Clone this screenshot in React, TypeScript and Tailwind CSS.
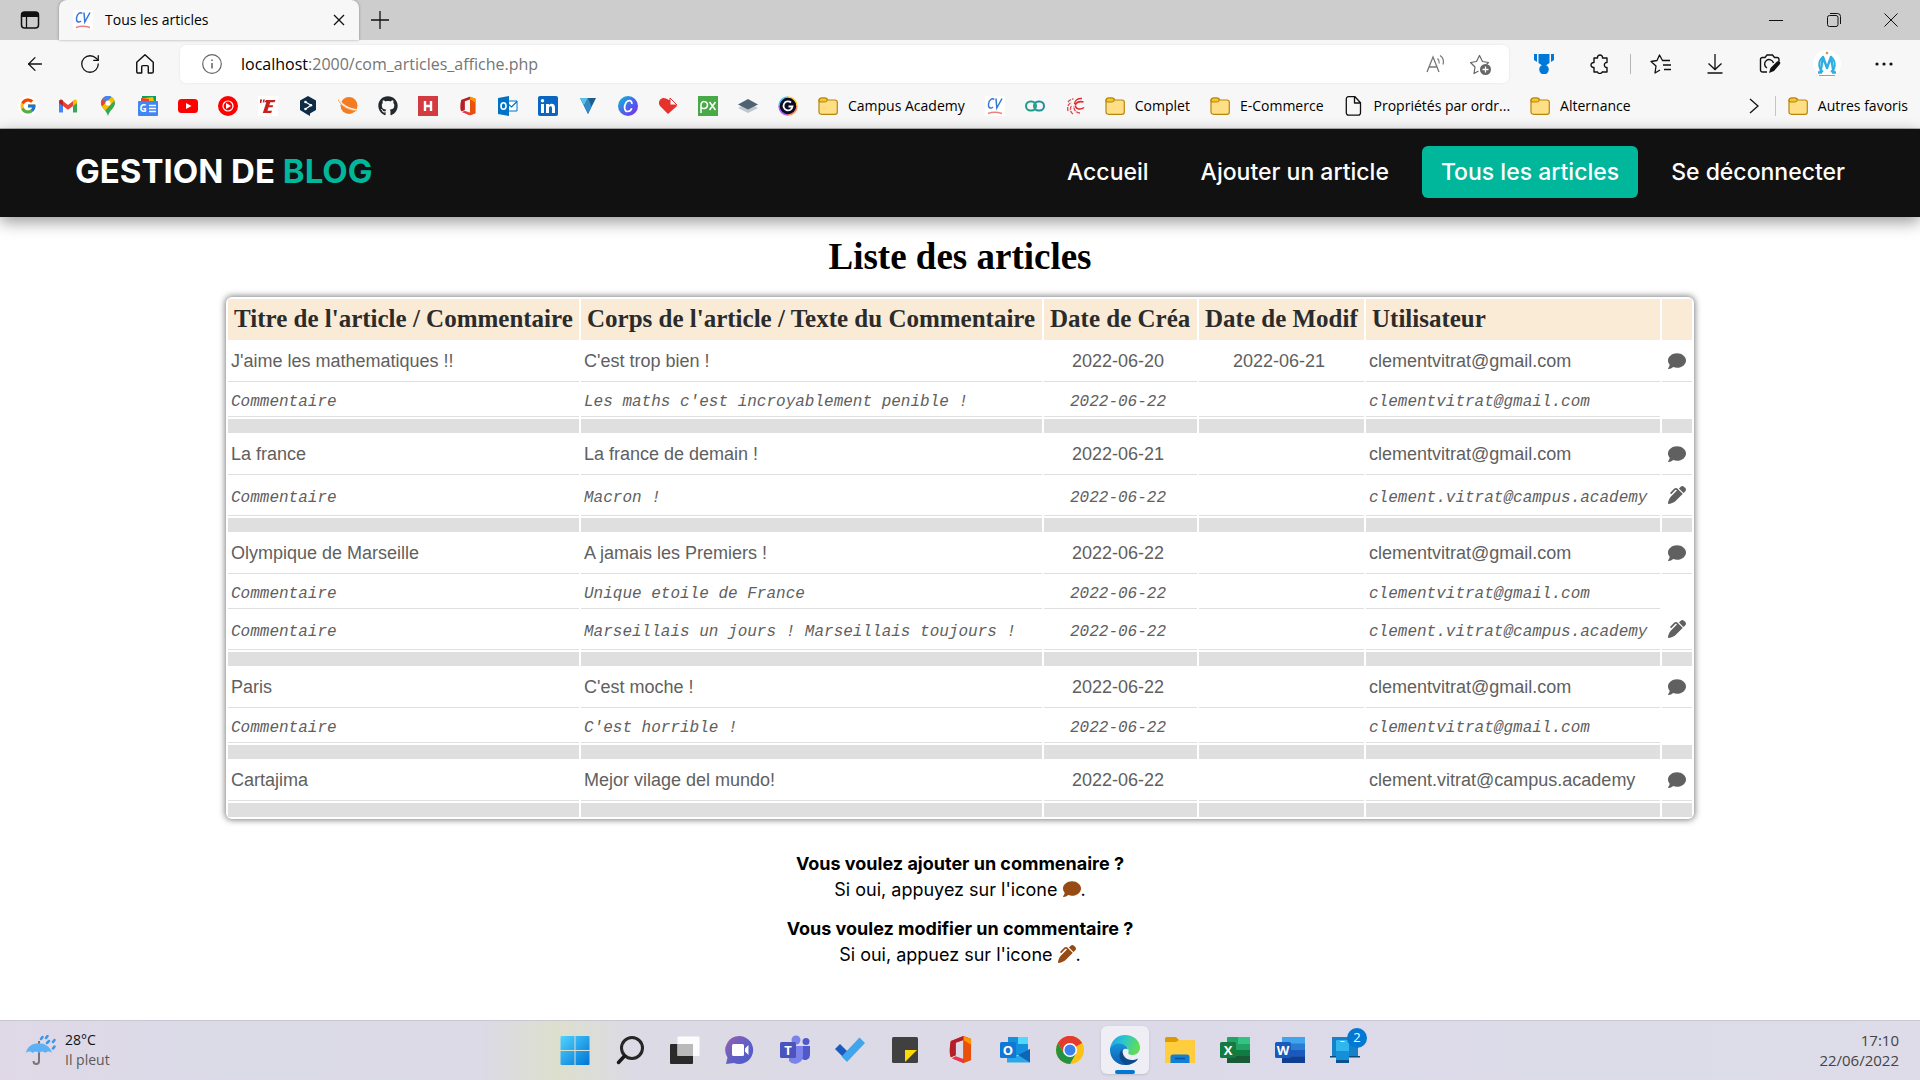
import React from "react";
import { FcGoogle } from "react-icons/fc";
import { FaComment, FaPenClip, FaGithub } from "react-icons/fa6";
import { ArrowLeft, RotateCw } from "lucide-react";

const ui = "font-['Open_Sans','Noto_Sans',sans-serif]";
const geo = "font-['Inter','Open_Sans',sans-serif]";

type SvgProps = { children: React.ReactNode; box?: string; className?: string };

function Svg({ children, box = "0 0 20 20", className = "size-5" }: SvgProps) {
  return (
    <svg viewBox={box} fill="none" aria-hidden="true" className={`shrink-0 ${className}`}>
      {children}
    </svg>
  );
}

function Folder() {
  return (
    <Svg>
      <path d="M1 4.500C1 3 2 2 3.500 2H7c1 0 1.500.4 2 1l.8 1H17c1.300 0 2.300 1 2.300 2.300V16c0 1.300-1 2.300-2.300 2.300H3.500C2 18.300 1 17.300 1 16z" fill="#ffdf85" stroke="#b8860b" strokeWidth="1.200" />
      <path d="M1 5C1 3 2 2 3.500 2H7c1 0 1.500.4 2 1l.3 1C9 5.500 8 6 7 6H2z" fill="#f5c52b" stroke="#b8860b" strokeWidth="1.200" />
    </Svg>
  );
}

function CvIcon() {
  return (
    <Svg>
      <rect width="20" height="20" fill="#fff" />
      <path d="M9.300 3.500C7 1.500 4 4 3.500 8s2 5 4.500 3M11 2.500l.8 9.500L17 2.500" stroke="#3478d6" strokeWidth="1.500" />
      <path d="M3 17.500c4-1.500 9-1.500 14 0" stroke="#f08080" strokeWidth="1.500" />
    </Svg>
  );
}

function OfficeIcon({ className }: { className?: string }) {
  return (
    <Svg box="0 0 24 30" className={className}>
      <path d="M15 1l8 3v22l-8 3-12-5 12 1V5L7 8v13l-5 2C0 21 1 8 2 6z" fill="#dc3e15" />
      <path d="M15 1l8 3v22l-8 3z" fill="#e8500b" />
      <path d="M15 1l8 3v6l-8-5z" fill="#ff9500" />
      <path d="M2 6l13-5v4L7 8v13l-5 2C0 19 1 9 2 6z" fill="#b3202c" />
      <path d="M3 24l4-2 8 3v4z" fill="#f0334c" />
    </Svg>
  );
}

const favicons: { name: string; icon: React.ReactNode }[] = [
  { name: "Google", icon: <FcGoogle className="size-5 rounded-full bg-white p-px" /> },
  {
    name: "Gmail",
    icon: (
      <Svg>
        <path d="M1 5v12h4V9l5 4 5-4v8h4V5z" fill="#fff" />
        <path d="M1 6v10.500h4V8.500z" fill="#4285f4" />
        <path d="M19 6v10.500h-4V8.500z" fill="#34a853" />
        <path d="M5 5l5 4 5-4v5l-5 3.800L5 10z" fill="#ea4335" />
        <path d="M1 5.500C1 3.500 3.300 2.800 5 4.500V10L1 7z" fill="#c5221f" />
        <path d="M19 5.500c0-2-2.300-2.700-4-1V10l4-3z" fill="#fbbc04" />
      </Svg>
    ),
  },
  {
    name: "Maps",
    icon: (
      <Svg>
        <path d="M10 0a7 7 0 0 0-7 7c0 5 5.500 7 7 13 1.500-6 7-8 7-13a7 7 0 0 0-7-7z" fill="#34a853" />
        <path d="M10 0a7 7 0 0 0-5.400 2.500L8 5.500 13.500 1A7 7 0 0 0 10 0z" fill="#4285f4" />
        <path d="M4.600 2.500A7 7 0 0 0 4 10.500L8 6z" fill="#ea4335" />
        <path d="M4 10.500c.8 1.500 2 2.800 3 4.200L16.500 4.500A7 7 0 0 0 13.500 1z" fill="#fbbc04" />
        <path d="M13.500 1A7 7 0 0 0 4.600 2.500L8 5.500z" fill="#4285f4" />
        <circle cx="10" cy="7" r="2.600" fill="#fff" />
      </Svg>
    ),
  },
  {
    name: "Google News",
    icon: (
      <Svg>
        <path d="M4 0h14v8H4z" fill="#0f9d58" />
        <path d="M3 2.500l12-1.500 2 8H3z" fill="#fbbc04" />
        <path d="M3 2l8 1v6H3z" fill="#ea4335" />
        <rect y="5" width="20" height="15" rx="1" fill="#4285f4" />
        <text x="1.500" y="16" fontSize="10" fontWeight="700" fill="#fff">G</text>
        <path d="M11 9.500h7M11 12.500h7M11 15.500h7" stroke="#fff" strokeWidth="1.500" />
      </Svg>
    ),
  },
  {
    name: "YouTube",
    icon: (
      <Svg>
        <rect y="3" width="20" height="14" rx="3.500" fill="#f00" />
        <path d="M8 7l5.500 3L8 13z" fill="#fff" />
      </Svg>
    ),
  },
  {
    name: "YouTube Music",
    icon: (
      <Svg>
        <circle cx="10" cy="10" r="10" fill="#f00" />
        <circle cx="10" cy="10" r="5" stroke="#fff" strokeWidth="1.200" />
        <path d="M8 7l5 3-5 3z" fill="#fff" />
      </Svg>
    ),
  },
  {
    name: "L'Equipe",
    icon: (
      <Svg>
        <rect width="20" height="20" fill="#fff" />
        <path d="M8 4h9.500l-1 2.200h-4.200l-1 3h4l-.8 2h-3.900l-1.200 3.600h4.600l-.8 2.200H4.800l3.500-10.800H6zM2 3.500h2.200L3.200 7H2zM5.200 3.500H7L5.800 6.500h-1z" fill="#c8201a" />
      </Svg>
    ),
  },
  {
    name: "DeepL",
    icon: (
      <Svg>
        <path d="M10 0l8 4.500v9.500L12 17.500V20l-4-2.300L2 14V4.500z" fill="#0f2b46" />
        <path d="M7.500 6L13 9.300 7.500 13" stroke="#fff" strokeWidth="1.200" />
        <circle cx="7.500" cy="6" r="1.300" fill="#fff" />
        <circle cx="13" cy="9.300" r="1.300" fill="#fff" />
        <circle cx="7.500" cy="13" r="1.300" fill="#fff" />
      </Svg>
    ),
  },
  {
    name: "Planet",
    icon: (
      <Svg>
        <circle cx="11" cy="9.500" r="8.500" fill="#f47b20" />
        <path d="M0 3c4 7 11 10.500 20 11.500" stroke="#f7f7f7" strokeWidth="2.200" />
        <path d="M0 3.500C3 10 10 14 19 14.800" stroke="#f9a45c" strokeWidth="1" />
      </Svg>
    ),
  },
  { name: "GitHub", icon: <FaGithub className="size-5 text-[#24292f]" /> },
  {
    name: "H",
    icon: (
      <Svg>
        <rect width="20" height="20" fill="#d33b40" />
        <path d="M7 5v10M13 5v10M7 10h6" stroke="#fff" strokeWidth="2.400" />
      </Svg>
    ),
  },
  { name: "Office", icon: <OfficeIcon className="size-5" /> },
  {
    name: "Outlook",
    icon: (
      <Svg>
        <path d="M9 5h10v10H9z" fill="#fff" stroke="#0072c6" />
        <path d="M10 8l3.500 3L19 5.500" stroke="#0072c6" strokeWidth="1.200" />
        <path d="M0 2l11-2v20L0 18z" fill="#0072c6" />
        <ellipse cx="5.500" cy="10" rx="2.500" ry="3.300" stroke="#fff" strokeWidth="1.600" />
      </Svg>
    ),
  },
  {
    name: "LinkedIn",
    icon: (
      <Svg>
        <rect width="20" height="20" rx="2" fill="#0a66c2" />
        <path d="M3 8h3v9H3zM8 8h3v1.300C12.500 7 17 7.300 17 11.500V17h-3v-5c0-2.300-3-2.300-3 0v5H8z" fill="#fff" />
        <circle cx="4.500" cy="4.700" r="1.700" fill="#fff" />
      </Svg>
    ),
  },
  {
    name: "V",
    icon: (
      <Svg>
        <path d="M2 2h16l-8 16z" fill="#1d5d8c" />
        <path d="M2 2h8L6 9.500z" fill="#5bc0e8" />
        <path d="M6 9.500L10 2l3.500 8.500L10 18z" fill="#2f8cc8" />
      </Svg>
    ),
  },
  {
    name: "Canva",
    icon: (
      <Svg>
        <defs>
          <linearGradient id="canva" x1="0" y1="0" x2="1" y2="1">
            <stop offset="0" stopColor="#00c4cc" />
            <stop offset=".5" stopColor="#4a66f0" />
            <stop offset="1" stopColor="#7d2ae8" />
          </linearGradient>
        </defs>
        <circle cx="10" cy="10" r="10" fill="url(#canva)" />
        <path d="M13.800 8c.6-4-4-4.500-6-1s-1.600 8.500 1.800 8.500c2 0 3.500-1.500 4.200-3.300" stroke="#fff" strokeWidth="1.700" />
      </Svg>
    ),
  },
  {
    name: "I Love PDF",
    icon: (
      <Svg>
        <path d="M10 18L2 10C-1 6 3 0 8 2.500L11 4h2l6 6z" fill="#e5322d" />
        <path d="M12 2l7 7h-7z" fill="#fff" stroke="#e5322d" />
      </Svg>
    ),
  },
  {
    name: "Pixabay",
    icon: (
      <Svg>
        <rect width="20" height="20" fill="#48a947" />
        <path d="M3 17V9c0-5 6.500-4 6.500 0S4 13.500 3 11M11.500 6l6 8M17.500 6l-6 8" stroke="#fff" strokeWidth="1.500" />
      </Svg>
    ),
  },
  {
    name: "Layers",
    icon: (
      <Svg>
        <path d="M10 7l10 5-10 5-10-5z" fill="#bfc6cd" />
        <path d="M10 3l10 5.500-10 5-10-5z" fill="#4e6272" />
      </Svg>
    ),
  },
  {
    name: "G",
    icon: (
      <Svg>
        <circle cx="10" cy="10" r="9" fill="#0b0b23" />
        <path d="M10 1a9 9 0 0 1 9 9" stroke="#ffd23f" strokeWidth="1.500" />
        <path d="M19 10a9 9 0 0 1-9 9" stroke="#ff8a5c" strokeWidth="1.500" />
        <path d="M10 19a9 9 0 0 1-9-9" stroke="#a25cf0" strokeWidth="1.500" />
        <path d="M1 10a9 9 0 0 1 9-9" stroke="#45c9f5" strokeWidth="1.500" />
        <path d="M13 6.500a4.500 4.500 0 1 0 1.500 4h-4" stroke="#fff" strokeWidth="1.800" />
      </Svg>
    ),
  },
];

function BookmarkFolder({ label }: { label: string }) {
  return (
    <a href="#" className="flex items-center gap-2.5 whitespace-nowrap">
      <Folder />
      {label}
    </a>
  );
}

function TabStrip() {
  return (
    <div className="flex h-10 bg-[#cdcdcd]">
      <button aria-label="Menu des onglets" className="flex w-[59px] items-center justify-center">
        <Svg>
          <rect x="1.500" y="2" width="17" height="16" rx="3" stroke="#111" strokeWidth="1.500" />
          <path d="M1.500 7V5a3 3 0 0 1 3-3h11a3 3 0 0 1 3 3v2z" fill="#111" />
          <path d="M6.500 6v12" stroke="#111" strokeWidth="1.300" />
        </Svg>
      </button>
      <div className="flex w-[300px] items-center rounded-t-lg bg-[#f7f7f7] px-3.5 shadow-[0_0_3px_rgba(0,0,0,0.35)]">
        <CvIcon />
        <span className="ml-3 flex-1 text-sm">Tous les articles</span>
        <button aria-label="Fermer l'onglet">
          <Svg box="0 0 12 12" className="size-3"><path d="M1 1l10 10M11 1L1 11" stroke="#111" strokeWidth="1.300" /></Svg>
        </button>
      </div>
      <button aria-label="Nouvel onglet" className="ml-3">
        <Svg box="0 0 18 18" className="size-[18px]"><path d="M9 0v18M0 9h18" stroke="#111" strokeWidth="1.300" /></Svg>
      </button>
      <div className="ml-auto flex">
        <button aria-label="Réduire" className="flex w-[58px] items-center justify-center">
          <Svg box="0 0 14 14" className="size-3.5"><path d="M0 7.500h14" stroke="#111" /></Svg>
        </button>
        <button aria-label="Restaurer" className="flex w-[57px] items-center justify-center">
          <Svg box="0 0 14 14" className="size-3.5">
            <rect x=".5" y="2.500" width="10.500" height="11" rx="2" stroke="#111" />
            <path d="M3 .5h7.500a3 3 0 0 1 3 3V11" stroke="#111" />
          </Svg>
        </button>
        <button aria-label="Fermer" className="flex w-[58px] items-center justify-center">
          <Svg box="0 0 14 14" className="size-3.5"><path d="M.5.5l13 13M13.500.5l-13 13" stroke="#111" /></Svg>
        </button>
      </div>
    </div>
  );
}

function AddressRow() {
  return (
    <div className="flex h-12 items-center bg-[#f7f7f7] pl-6">
      <div className="flex w-[156px] items-center gap-[33px] text-[#111]">
        <button aria-label="Retour"><ArrowLeft className="size-[22px]" strokeWidth={1.4} /></button>
        <button aria-label="Actualiser"><RotateCw className="size-[22px]" strokeWidth={1.4} /></button>
        <button aria-label="Accueil">
          <Svg className="size-[22px]"><path d="M2.500 8.500L10 1.500l7.500 7V17a1.200 1.200 0 0 1-1.200 1.200H13V12.500a1 1 0 0 0-1-1H8a1 1 0 0 0-1 1v5.700H3.700A1.200 1.200 0 0 1 2.500 17z" stroke="#111" strokeWidth="1.300" strokeLinejoin="round" /></Svg>
        </button>
      </div>
      <div className="flex h-[38px] flex-1 items-center rounded-md bg-white px-[18px] shadow-[0_0_3px_rgba(0,0,0,0.08)]">
        <div className="flex w-full items-center pl-1">
          <Svg>
            <circle cx="10" cy="10" r="9.300" stroke="#666" strokeWidth="1.200" />
            <path d="M10 9v5.500M10 5.500V7" stroke="#555" strokeWidth="1.400" />
          </Svg>
          <p className="ml-[19px] flex-1 text-base text-[#757575]">
            <span className="text-black">localhost</span>:2000/com_articles_affiche.php
          </p>
          <button aria-label="Lire à voix haute" className="mr-[23px]">
            <Svg>
              <path d="M1 18L7 3l6 15M3 13h8" stroke="#777" strokeWidth="1.300" />
              <path d="M11.500 4.500c1.500 1.300 2 3 1.700 5M14 1.500c3 2 4 5.500 3 9" stroke="#777" strokeWidth="1.200" />
            </Svg>
          </button>
          <button aria-label="Ajouter aux favoris">
            <Svg box="0 0 22 22" className="size-[22px]">
              <path d="M9.500 18L5 20.500l1-6.500-4.500-4.500 6-1L10.500 2.500l3 6 6 1-2 2" stroke="#666" strokeWidth="1.200" strokeLinejoin="round" />
              <circle cx="16.500" cy="16.500" r="5.500" fill="#666" />
              <path d="M16.500 13.500v6M13.500 16.500h6" stroke="#fff" strokeWidth="1.300" />
            </Svg>
          </button>
        </div>
      </div>
      <div className="flex items-center pr-[27px] pl-[25px]">
        <button aria-label="Récompenses">
          <Svg>
            <path d="M0 0h3v8L0 6zM4.500 0h11v9l-3 2h-5l-3-2zM20 0h-3v8l3-2z" fill="#0078d7" />
            <circle cx="10" cy="15.500" r="4.800" fill="#0078d7" />
          </Svg>
        </button>
        <button aria-label="Extensions" className="ml-9">
          <Svg>
            <path d="M4 4h3.500c-.5-4 5.500-4 5 0H17v4.500c-3.500-.5-3.500 5.500 0 5V18h-4.500c.3-1-.5 1.500-2.500 1.500S7.300 18 7.500 18H4v-4.500c-4 .5-4-5.500 0-5z" stroke="#111" strokeWidth="1.400" strokeLinejoin="round" />
          </Svg>
        </button>
        <span className="ml-5 h-5 w-px bg-[#b5b5b5]" />
        <button aria-label="Favoris" className="ml-[19px]">
          <Svg box="0 0 22 22" className="size-[22px]">
            <path d="M10 17l-5 3 1-7-5-4.500 6-1L9.500 2l3 5.500H20M13 12h8M14 16.500h7" stroke="#111" strokeWidth="1.300" strokeLinejoin="round" />
          </Svg>
        </button>
        <button aria-label="Téléchargements" className="ml-[33px]">
          <Svg><path d="M10 0v15M3.500 9.500l6.500 6 6.500-6M2.500 19h15" stroke="#111" strokeWidth="1.300" /></Svg>
        </button>
        <button aria-label="Capture web" className="ml-[34px]">
          <Svg box="0 0 22 22" className="size-[22px]">
            <path d="M8 19H3.500A2 2 0 0 1 1.500 17V6.500a2 2 0 0 1 2-2H6L8 2h5.500l2 2.500H18a2 2 0 0 1 2 2V8" stroke="#111" strokeWidth="1.400" />
            <path d="M8 15a4.500 4.500 0 1 1 6.500-5" stroke="#111" strokeWidth="1.400" />
            <path d="M10 20l1.500-5L18 8.500c2-1.500 4 .5 3 2.500L15 18z" fill="#111" />
          </Svg>
        </button>
        <button aria-label="Profil" className="ml-8 rounded-full bg-white">
          <Svg box="0 0 28 28" className="size-7">
            <path d="M10 7C5 11 5 18 10 22M18 7c5 4 5 11 0 15" stroke="#2faee0" strokeWidth="2" />
            <path d="M5 22.500h4M19 22.500h4M7.500 22L10 7l4 11 4-11 2.500 15" stroke="#2faee0" strokeWidth="2.400" strokeLinejoin="round" />
            <circle cx="14" cy="3" r="1.300" fill="#c79a4b" />
            <path d="M6 25.500h16" stroke="#c79a4b" />
          </Svg>
        </button>
        <button aria-label="Paramètres" className="ml-[34px]">
          <Svg box="0 0 18 18" className="size-[18px]">
            <circle cx="2" cy="9" r="1.600" fill="#111" /><circle cx="9" cy="9" r="1.600" fill="#111" /><circle cx="16" cy="9" r="1.600" fill="#111" />
          </Svg>
        </button>
      </div>
    </div>
  );
}

function BookmarksBar() {
  return (
    <div className="flex h-[41px] items-center gap-5 border-b border-[#b5b5b5] bg-[#f7f7f7] pr-3 pb-1 pl-[18px] text-sm">
      {favicons.map((f) => (
        <a key={f.name} href="#" aria-label={f.name}>{f.icon}</a>
      ))}
      <BookmarkFolder label="Campus Academy" />
      <a href="#" aria-label="CV"><CvIcon /></a>
      <a href="#" aria-label="Cercles">
        <Svg>
          <rect x="1" y="5.500" width="10" height="9" rx="4.500" stroke="#1f9e86" strokeWidth="2" />
          <rect x="9" y="5.500" width="10" height="9" rx="4.500" stroke="#1f8f9e" strokeWidth="2" />
          <path d="M10 6.500v7" stroke="#23a88f" strokeWidth="1.500" />
        </Svg>
      </a>
      <a href="#" aria-label="Spirale">
        <Svg>
          <path d="M17 2.500C13 2 9.500 4.500 9.500 8M18.500 6c-4-1-7 0-8.500 3.500M19 11.500c-3 2.500-8 2-8.500-1.500" stroke="#dc2b33" strokeWidth="1.500" />
          <path d="M15 17c-4 0-6.500-3-6-7M8 18c-3-2-3.500-6-1-9M3 15C2 11 3 8 6.500 6.500M3 6c1.500-2 3.500-3 5.500-3" stroke="#e0474e" strokeWidth="1.300" strokeDasharray="4 1" />
        </Svg>
      </a>
      <BookmarkFolder label="Complet" />
      <BookmarkFolder label="E-Commerce" />
      <a href="#" className="flex items-center gap-2.5 whitespace-nowrap">
        <Svg>
          <path d="M4.500.7H11l5.500 6V17a2.200 2.200 0 0 1-2.200 2.200H4.500A2.200 2.200 0 0 1 2.300 17V3A2.200 2.200 0 0 1 4.500.7zM10.500.7V7h6" stroke="#111" strokeWidth="1.300" strokeLinejoin="round" />
        </Svg>
        Propriétés par ordr...
      </a>
      <BookmarkFolder label="Alternance" />
      <div className="ml-auto flex items-center">
        <button aria-label="Plus de favoris">
          <Svg box="0 0 10 16" className="h-4 w-2.5"><path d="M1 1l8 7-8 7" stroke="#111" strokeWidth="1.300" /></Svg>
        </button>
        <span className="mr-3 ml-4 h-5 w-px bg-[#c5c5c5]" />
        <BookmarkFolder label="Autres favoris" />
      </div>
    </div>
  );
}

const navLinks = ["Accueil", "Ajouter un article", "Tous les articles", "Se déconnecter"];

function SiteHeader() {
  return (
    <header className={`flex h-[88px] items-center justify-between bg-[#111] pr-14 pb-0.5 pl-[75px] text-white shadow-[0_5px_15px_rgba(0,0,0,0.4)] ${geo}`}>
      <a href="#" className="text-[33px] font-bold whitespace-nowrap">
        GESTION DE <span className="text-[#00b69b]">BLOG</span>
      </a>
      <nav className="flex gap-3.5 text-[23px] font-medium whitespace-nowrap">
        {navLinks.map((label) => (
          <a
            key={label}
            href="#"
            className={
              label === "Tous les articles"
                ? "flex h-[52px] items-center rounded-md bg-[#00b69b] px-[19px]"
                : "flex h-[52px] items-center px-[19px]"
            }
          >
            {label}
          </a>
        ))}
      </nav>
    </header>
  );
}

type Row = { title?: string; body: string; created: string; edited?: string; user: string; action?: "comment" | "edit" };

const groups: Row[][] = [
  [
    { title: "J'aime les mathematiques !!", body: "C'est trop bien !", created: "2022-06-20", edited: "2022-06-21", user: "clementvitrat@gmail.com", action: "comment" },
    { body: "Les maths c'est incroyablement penible !", created: "2022-06-22", user: "clementvitrat@gmail.com" },
  ],
  [
    { title: "La france", body: "La france de demain !", created: "2022-06-21", user: "clementvitrat@gmail.com", action: "comment" },
    { body: "Macron !", created: "2022-06-22", user: "clement.vitrat@campus.academy", action: "edit" },
  ],
  [
    { title: "Olympique de Marseille", body: "A jamais les Premiers !", created: "2022-06-22", user: "clementvitrat@gmail.com", action: "comment" },
    { body: "Unique etoile de France", created: "2022-06-22", user: "clementvitrat@gmail.com" },
    { body: "Marseillais un jours ! Marseillais toujours !", created: "2022-06-22", user: "clement.vitrat@campus.academy", action: "edit" },
  ],
  [
    { title: "Paris", body: "C'est moche !", created: "2022-06-22", user: "clementvitrat@gmail.com", action: "comment" },
    { body: "C'est horrible !", created: "2022-06-22", user: "clementvitrat@gmail.com" },
  ],
  [
    { title: "Cartajima", body: "Mejor vilage del mundo!", created: "2022-06-22", user: "clement.vitrat@campus.academy", action: "comment" },
  ],
];

const headings = ["Titre de l'article / Commentaire", "Corps de l'article / Texte du Commentaire", "Date de Créa", "Date de Modif", "Utilisateur", ""];

function ArticleRow({ row }: { row: Row }) {
  const article = row.title !== undefined;
  const height = article ? "h-10" : row.action ? "h-[39px]" : "h-[33px]";
  const font = article
    ? "font-['Liberation_Sans',Arial,sans-serif] text-lg/5"
    : "font-['Liberation_Mono',monospace] text-base/5 italic";
  const line = "border-b border-[#dfdfdf] px-[3px]";
  const cell = article ? `${line} pb-0.5` : `${line} pt-[3px]`;
  return (
    <tr className={`${height} ${font} whitespace-nowrap`}>
      <td className={cell}>{row.title ?? "Commentaire"}</td>
      <td className={cell}>{row.body}</td>
      <td className={`${cell} pr-2 text-center`}>{row.created}</td>
      <td className={`${cell} pr-2 text-center`}>{row.edited}</td>
      <td className={cell}>{row.user}</td>
      <td className={row.action ? `${line} pb-0.5` : ""}>
        {row.action && (
          <button aria-label={row.action === "comment" ? "Commenter" : "Modifier"} className="mx-auto block">
            {row.action === "comment" ? <FaComment className="size-[18px]" /> : <FaPenClip className="size-[18px]" />}
          </button>
        )}
      </td>
    </tr>
  );
}

function ArticleTable() {
  return (
    <table className="mx-auto border-separate border-spacing-0.5 rounded-md bg-white text-[#606060] shadow-[0_0_6px_1px_rgba(0,0,0,0.5)]">
      <colgroup>
        <col className="w-[351px]" />
        <col className="w-[461px]" />
        <col className="w-[153px]" />
        <col className="w-[165px]" />
        <col className="w-[294px]" />
        <col className="w-[30px]" />
      </colgroup>
      <thead>
        <tr className="h-[41px] text-left font-['Liberation_Serif','Times_New_Roman',serif] text-[25px] leading-7 whitespace-nowrap text-[#2b2b2b]">
          {headings.map((h) => (
            <th key={h} className="bg-[#faebd7] px-1.5 pb-0.5 font-bold">{h}</th>
          ))}
        </tr>
      </thead>
      {groups.map((rows, g) => (
        <tbody key={g}>
          {rows.map((row, i) => <ArticleRow key={i} row={row} />)}
          <tr className="h-3.5">
            {headings.map((h) => <td key={h} className="bg-[#dfdfdf]" />)}
          </tr>
        </tbody>
      ))}
    </table>
  );
}

function LetterTile({ letter, dark }: { letter: string; dark: string }) {
  return (
    <>
      <rect y="7" width="16" height="16" rx="1.500" fill={dark} />
      <text x="8" y="19.500" textAnchor="middle" fontSize="13" fontWeight="700" fill="#fff">{letter}</text>
    </>
  );
}

const taskIcons: { name: string; icon: React.ReactNode }[] = [
  {
    name: "Démarrer",
    icon: (
      <>
        <defs>
          <linearGradient id="win" x1="0" y1="0" x2="1" y2="1">
            <stop offset="0" stopColor="#4fd3ff" />
            <stop offset="1" stopColor="#0074d4" />
          </linearGradient>
        </defs>
        <path d="M.5 2a1 1 0 0 1 1-1H14.500v14H.5zM15.500 1H28.500a1 1 0 0 1 1 1V15h-14zM.5 16H14.500v14h-13a1 1 0 0 1-1-1zM15.500 16h14v13a1 1 0 0 1-1 1h-13z" fill="url(#win)" />
      </>
    ),
  },
  { name: "Rechercher", icon: <><circle cx="17" cy="13" r="10.500" stroke="#262626" strokeWidth="3" /><path d="M9.500 21L3.500 27.500" stroke="#1a1a1a" strokeWidth="3.500" strokeLinecap="round" /></> },
  { name: "Vue des tâches", icon: <><rect y="9" width="23" height="20" rx="1" fill="#2a2a2a" /><rect x="7.500" y="1.500" width="22" height="19.500" rx="1" fill="#fff" fillOpacity=".9" /><path d="M7.500 9H23v12H7.500z" fill="#b9b9b9" /></> },
  {
    name: "Conversation",
    icon: (
      <>
        <defs><linearGradient id="chat" x1="0" y1="0" x2="1" y2="1"><stop offset="0" stopColor="#9660b0" /><stop offset=".6" stopColor="#5b5fc7" /><stop offset="1" stopColor="#5059c9" /></linearGradient></defs>
        <path d="M15 1a14 14 0 1 1-6 27L1 29l1.500-6.500A14 14 0 0 1 15 1z" fill="url(#chat)" />
        <rect x="7" y="9" width="12" height="12" rx="1.500" fill="#fff" />
        <path d="M20 13.500L23.500 10v10L20 16.500z" fill="#fff" />
      </>
    ),
  },
  { name: "Teams", icon: <><circle cx="16" cy="5" r="4.500" fill="#7b83eb" /><circle cx="26" cy="6.500" r="3.500" fill="#5059c9" /><path d="M20 11h10v9a5 5 0 0 1-8 4z" fill="#5059c9" /><path d="M9 11h14v10a8 8 0 0 1-14 5z" fill="#7b83eb" /><LetterTile letter="T" dark="#4b53bc" /></> },
  { name: "To Do", icon: <><path d="M0 14l5-5 9 9-5 5z" fill="#185abd" /><path d="M6.500 21.500L24.500 2.500l5.500 5.500-18 19z" fill="#41a5ee" /></> },
  { name: "Pense-bêtes", icon: <><rect x="2" y="2" width="26" height="26" rx="1.500" fill="#404040" /><path d="M15 15h12L15 27z" fill="#ffd900" /></> },
  { name: "Office", icon: <svg x="4" y="0" width="23" height="29" viewBox="0 0 24 30"><OfficeIcon className="" /></svg> },
  { name: "Outlook", icon: <><rect x="8" y="2" width="20" height="18" fill="#1490df" /><path d="M18 2h10v7H18z" fill="#50d9ff" /><path d="M7 14l11 7 12-7v13.500H7z" fill="#28a8ea" /><path d="M30 14v13.500L18 20z" fill="#1066b5" /><LetterTile letter="O" dark="#0f78d4" /></> },
  { name: "Chrome", icon: <><circle cx="15" cy="15" r="14" fill="#fbc116" /><path d="M15 15L2.900 8A14 14 0 0 1 27.100 8z" fill="#e33b2e" /><path d="M15 8h12.100A14 14 0 0 0 2.900 8L9 18.500z" fill="#e33b2e" /><path d="M2.900 8A14 14 0 0 0 15 29l6-10.500-12 0z" fill="#229342" /><circle cx="15" cy="15" r="7" fill="#fff" /><circle cx="15" cy="15" r="5.500" fill="#3b82ee" /></> },
  {
    name: "Edge",
    icon: (
      <>
        <defs>
          <linearGradient id="edge" x1="0" y1="0" x2="1" y2=".3"><stop offset="0" stopColor="#1a9fe0" /><stop offset=".5" stopColor="#2cc6cf" /><stop offset="1" stopColor="#5fdc58" /></linearGradient>
          <linearGradient id="edge2" x1="0" y1="0" x2="0" y2="1"><stop offset="0" stopColor="#1794dc" /><stop offset="1" stopColor="#0a5eb0" /></linearGradient>
        </defs>
        <path d="M0 14C1 6 7 0 15 0c9 0 15 6 15 12.500 0 5-4 7.500-7.500 7.500-3 0-5-1-4-3 1-4-4-8-9-7C5 10.500 1 12 0 16z" fill="url(#edge)" />
        <path d="M0 15c0-3 4-6.500 8.500-6.500 5 0 9 3 9.500 6-3-2-6 0-6 3.500 0 5 4 8 9 8 3 0 5-1 7-2-3 4-8 6-13 6C6 30 0 23 0 15z" fill="url(#edge2)" />
        <path d="M12.500 14.500C8 17 8 26 16 29.800 21 29.500 26 27 28 23.500c-8 4-16 0-15.500-9z" fill="#0f4a8c" />
      </>
    ),
  },
  { name: "Explorateur de fichiers", icon: <><path d="M0 3.500A1.500 1.500 0 0 1 1.500 2H11l3 3h14.500A1.500 1.500 0 0 1 30 6.500V10H0z" fill="#dd9b00" /><path d="M0 7h11l3-2h14.500A1.500 1.500 0 0 1 30 6.500V28H0z" fill="#ffcd3d" /><path d="M5.500 28v-6a2.500 2.500 0 0 1 2.500-2.500h14a2.500 2.500 0 0 1 2.500 2.500v6z" fill="#0f7fd8" /><path d="M10 23.500h10" stroke="#0a5299" strokeWidth="1.500" /></> },
  { name: "Excel", icon: <><rect x="7" y="2" width="23" height="26" rx="1" fill="#21a366" /><path d="M18 2h12v7H18z" fill="#33c481" /><path d="M7 15h23v6H7z" fill="#107c41" /><path d="M7 21h23v7H7z" fill="#185c37" /><LetterTile letter="X" dark="#107c41" /></> },
  { name: "Word", icon: <><rect x="7" y="2" width="23" height="26" rx="1" fill="#2b7cd3" /><path d="M7 2h23v6.500H7z" fill="#41a5ee" /><path d="M7 15h23v6.500H7z" fill="#185abd" /><path d="M7 21.500h23V28H7z" fill="#103f91" /><LetterTile letter="W" dark="#185abd" /></> },
  { name: "Votre téléphone", icon: <><path d="M2 2h26v19H2z" fill="#1581c9" /><path d="M0 21h30v1.500H0z" fill="#0c4a7a" /><rect x="6" y="5" width="13" height="23" rx="1" fill="#30b5ee" /><path d="M6 16h13v9H6z" fill="#1590d8" /><path d="M6 25h13v3H6z" fill="#104f8e" /><path d="M10.500 6.500h4" stroke="#fff" /></> },
];

function Taskbar() {
  return (
    <footer className={`grid h-[60px] grid-cols-[1fr_auto_1fr] items-center border-t border-[#c9c8d2] bg-[linear-gradient(90deg,#e0d8e6_0%,#dcdae8_8%,#dbdae6_25%,#dddfcd_29%,#dcdae5_33%,#dcdae8_60%,#dddce8_100%)] pb-px ${ui}`}>
      <div className="flex items-center gap-2 pl-[26px]">
        <Svg box="0 0 31 31" className="size-[31px]">
          <path d="M13 6v20c0 4-5.500 4-5.500 0" stroke="#777" strokeWidth="2" />
          <path d="M0 18C2 5 23 5 26 18c-2-2-5-2-6.500 0-2-2-4.500-2-6.500 0-2-2-4.500-2-6.500 0C5 16 2 16 0 18z" fill="#5eb0f5" />
          <path d="M15 4l1.500-2M20 3l1.500-2M21 8l2-2M27 7l1.500-2M27 13.500l1.500-2" stroke="#3b97ee" strokeWidth="2.500" strokeLinecap="round" />
        </Svg>
        <p className="text-sm leading-5 text-[#5a5a5a]">
          <span className="block text-[#111]">28°C</span>Il pleut
        </p>
      </div>
      <div className="flex">
        {taskIcons.map(({ name, icon }) => (
          <button key={name} aria-label={name} className="flex w-[55px] justify-center">
            <span
              className={
                name === "Edge"
                  ? "relative flex size-12 items-center justify-center rounded-md bg-[#efeef5] shadow-sm"
                  : "relative flex size-12 items-center justify-center"
              }
            >
              <Svg box="0 0 30 30" className="size-[30px]">{icon}</Svg>
              {name === "Edge" && <span className="absolute bottom-0 h-1 w-5 rounded-full bg-[#0078d4]" />}
              {name === "Votre téléphone" && (
                <span className="absolute top-0.5 right-0.5 flex size-5 items-center justify-center rounded-full bg-[#0078d4] text-[13px] text-white">2</span>
              )}
            </span>
          </button>
        ))}
      </div>
      <p className="pr-[21px] text-right text-[15px] leading-5 text-[#444]">
        <span className="block">17:10</span>22/06/2022
      </p>
    </footer>
  );
}

export default function App() {
  return (
    <div className="flex min-h-screen flex-col bg-white text-black">
      <div className={ui}>
        <TabStrip />
        <AddressRow />
        <BookmarksBar />
      </div>
      <SiteHeader />
      <main className="flex-1">
        <h1 className="mt-4 mb-[17px] text-center font-['Liberation_Serif','Times_New_Roman',serif] text-[37px] leading-[47px] font-bold">Liste des articles</h1>
        <ArticleTable />
        <div className={`mt-8 space-y-[13px] text-center text-lg leading-[26px] ${geo}`}>
          <p>
            <strong className="font-bold">Vous voulez ajouter un commenaire ?</strong><br />
            Si oui, appuyez sur l'icone <FaComment className="inline size-[18px] align-[-2px] text-[#964b14]" />.
          </p>
          <p>
            <strong className="font-bold">Vous voulez modifier un commentaire ?</strong><br />
            Si oui, appuez sur l'icone <FaPenClip className="inline size-[18px] align-[-2px] text-[#964b14]" />.
          </p>
        </div>
      </main>
      <Taskbar />
    </div>
  );
}
